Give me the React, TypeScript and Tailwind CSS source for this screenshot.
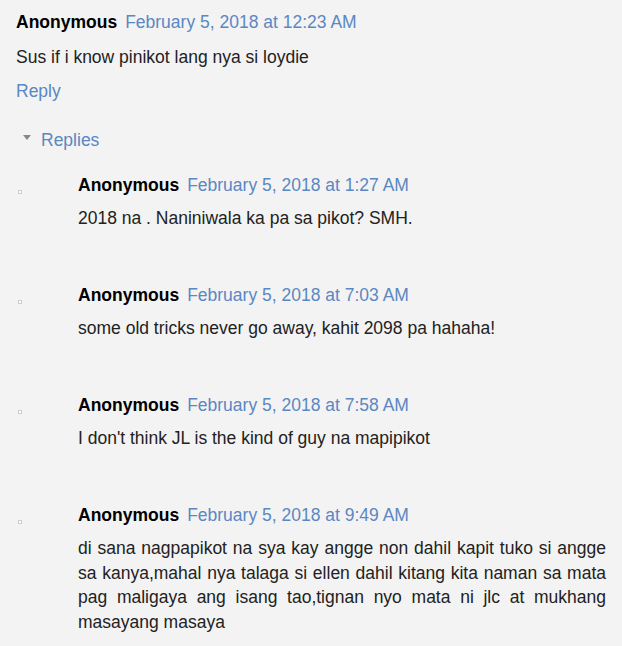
const replies = [
  { date: "February 5, 2018 at 1:27 AM", text: "2018 na . Naniniwala ka pa sa pikot? SMH." },
  { date: "February 5, 2018 at 7:03 AM", text: "some old tricks never go away, kahit 2098 pa hahaha!" },
  { date: "February 5, 2018 at 7:58 AM", text: "I don't think JL is the kind of guy na mapipikot" },
  {
    date: "February 5, 2018 at 9:49 AM",
    text: "di sana nagpapikot na sya kay angge non dahil kapit tuko si angge sa kanya,mahal nya talaga si ellen dahil kitang kita naman sa mata pag maligaya ang isang tao,tignan nyo mata ni jlc at mukhang masayang masaya",
  },
]

function Header({ date }: { date: string }) {
  return (
    <div className="flex items-baseline gap-2">
      <span className="font-bold text-black">Anonymous</span>
      <span className="text-[#5b87c2]">{date}</span>
    </div>
  )
}

export default function App() {
  return (
    <div className="min-h-[646px] w-[622px] bg-[#f3f3f3] pl-4 pr-4 pt-[10px] text-[17.5px] leading-[24px] text-[#222] font-['Liberation_Sans',Arial,sans-serif]">
      <Header date="February 5, 2018 at 12:23 AM" />
      <p className="mt-[11px]">Sus if i know pinikot lang nya si loydie</p>
      <div className="mt-[10px] text-[#5b87c2]">Reply</div>

      <div className="mt-[25px] flex items-center text-[#5b87c2]">
        <span className="ml-[7px] mr-[10px] -mt-[5px] h-0 w-0 border-x-[4.5px] border-t-[5px] border-x-transparent border-t-[#888]" />
        Replies
      </div>

      <ul className="mt-[21px] flex flex-col gap-[52.5px]">
        {replies.map((r) => (
          <li key={r.date} className="flex">
            <div className="w-[62px] shrink-0 pt-[17px] pl-[2px]">
              <div className="h-[4px] w-[4px] border border-[#ccc] bg-white" />
            </div>
            <div className="flex-1">
              <Header date={r.date} />
              <p className="mt-[9px] text-justify leading-[24.5px]">{r.text}</p>
            </div>
          </li>
        ))}
      </ul>
    </div>
  )
}
